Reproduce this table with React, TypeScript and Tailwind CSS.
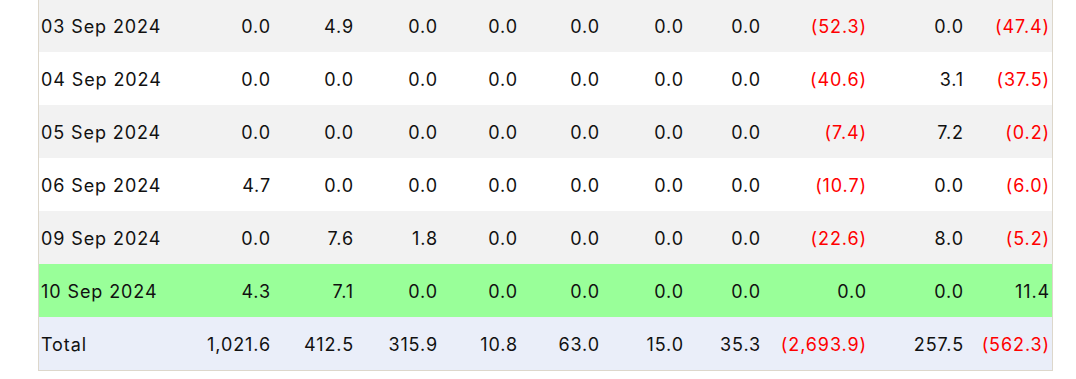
import React from 'react';

type Row = { date: string; values: number[]; highlight?: boolean };

const rows: Row[] = [
    { date: '03 Sep 2024', values: [0.0, 4.9, 0.0, 0.0, 0.0, 0.0, 0.0, -52.3, 0.0, -47.4] },
    { date: '04 Sep 2024', values: [0.0, 0.0, 0.0, 0.0, 0.0, 0.0, 0.0, -40.6, 3.1, -37.5] },
    { date: '05 Sep 2024', values: [0.0, 0.0, 0.0, 0.0, 0.0, 0.0, 0.0, -7.4, 7.2, -0.2] },
    { date: '06 Sep 2024', values: [4.7, 0.0, 0.0, 0.0, 0.0, 0.0, 0.0, -10.7, 0.0, -6.0] },
    { date: '09 Sep 2024', values: [0.0, 7.6, 1.8, 0.0, 0.0, 0.0, 0.0, -22.6, 8.0, -5.2] },
    { date: '10 Sep 2024', values: [4.3, 7.1, 0.0, 0.0, 0.0, 0.0, 0.0, 0.0, 0.0, 11.4], highlight: true },
];

const totals = [1021.6, 412.5, 315.9, 10.8, 63.0, 15.0, 35.3, -2693.9, 257.5, -562.3];

// date column first, then the ten value columns
const colWidths = ['w-[161px]', 'w-[73px]', 'w-[83px]', 'w-[84px]', 'w-[80px]', 'w-[82px]', 'w-[84px]', 'w-[77px]', 'w-[106px]', 'w-[97px]', 'w-[86px]'];

const fmt = (n: number) => {
    const s = Math.abs(n).toLocaleString('en-US', { minimumFractionDigits: 1, maximumFractionDigits: 1 });
    return n < 0 ? `(${s})` : s;
};

const Cell: React.FC<{ value: number }> = ({ value }) => (
    <td className={`text-right pr-[2px] pt-[1px] ${value < 0 ? 'text-[#ff0000]' : 'text-[#111111]'}`}>{fmt(value)}</td>
);

export default function App() {
    return (
        <div className="w-[1076px] h-[379px] overflow-hidden bg-white" style={{ fontFamily: 'Inter, "Noto Sans", sans-serif' }}>
            <div className="ml-[38px] -mt-[2px] w-[1015px] border border-[#ddd7cb]">
                <table className="w-[1013px] table-fixed border-collapse text-[18px] tracking-[0.9px]">
                    <colgroup>
                        {colWidths.map((w, i) => <col key={i} className={w} />)}
                    </colgroup>
                    <tbody>
                        {rows.map((r, i) => (
                            <tr
                                key={r.date}
                                className={`h-[53px] ${r.highlight ? 'bg-[#99ff99]' : i % 2 === 0 ? 'bg-[#f2f2f2]' : 'bg-white'}`}
                            >
                                <td className="pl-[2px] pt-[1px] text-[#111111]">{r.date}</td>
                                {r.values.map((v, j) => <Cell key={j} value={v} />)}
                            </tr>
                        ))}
                        <tr className="h-[53px] bg-[#eaeef9]">
                            <td className="pl-[2px] pt-[1px] text-[#111111]">Total</td>
                            {totals.map((v, j) => <Cell key={j} value={v} />)}
                        </tr>
                    </tbody>
                </table>
            </div>
        </div>
    );
}
